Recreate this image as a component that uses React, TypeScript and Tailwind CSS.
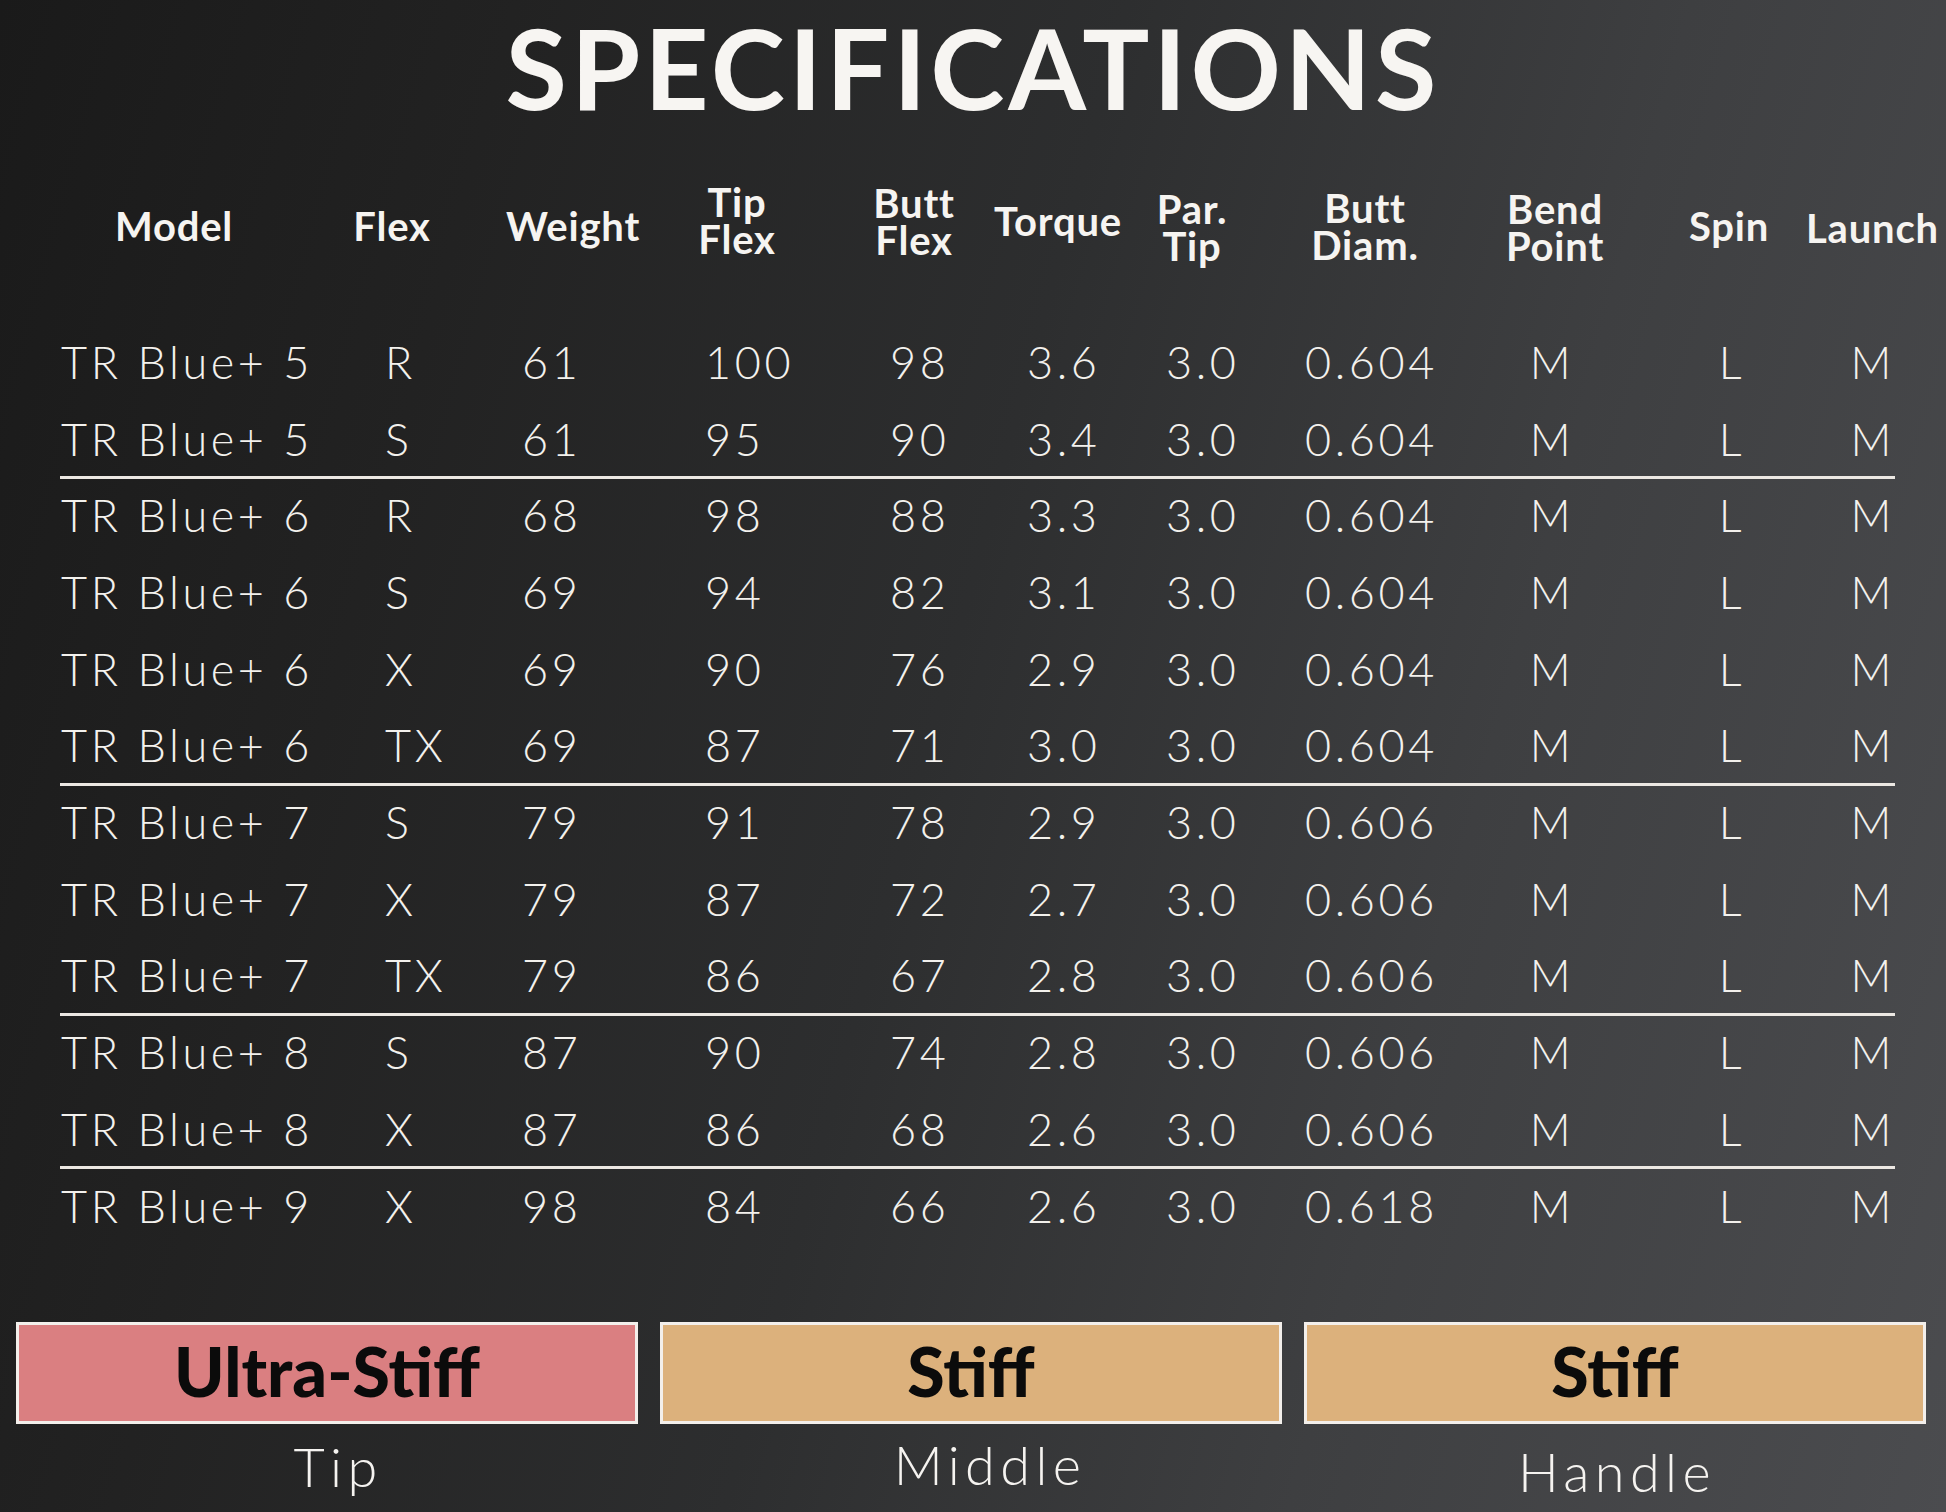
import React from "react";

type Spec = {
  model: string;
  flex: string;
  weight: string;
  tip: string;
  butt: string;
  torque: string;
  par: string;
  diam: string;
};

// rows grouped by model, a rule is drawn between groups
const groups: Spec[][] = [
  [
    { model: "TR Blue+ 5", flex: "R", weight: "61", tip: "100", butt: "98", torque: "3.6", par: "3.0", diam: "0.604" },
    { model: "TR Blue+ 5", flex: "S", weight: "61", tip: "95", butt: "90", torque: "3.4", par: "3.0", diam: "0.604" },
  ],
  [
    { model: "TR Blue+ 6", flex: "R", weight: "68", tip: "98", butt: "88", torque: "3.3", par: "3.0", diam: "0.604" },
    { model: "TR Blue+ 6", flex: "S", weight: "69", tip: "94", butt: "82", torque: "3.1", par: "3.0", diam: "0.604" },
    { model: "TR Blue+ 6", flex: "X", weight: "69", tip: "90", butt: "76", torque: "2.9", par: "3.0", diam: "0.604" },
    { model: "TR Blue+ 6", flex: "TX", weight: "69", tip: "87", butt: "71", torque: "3.0", par: "3.0", diam: "0.604" },
  ],
  [
    { model: "TR Blue+ 7", flex: "S", weight: "79", tip: "91", butt: "78", torque: "2.9", par: "3.0", diam: "0.606" },
    { model: "TR Blue+ 7", flex: "X", weight: "79", tip: "87", butt: "72", torque: "2.7", par: "3.0", diam: "0.606" },
    { model: "TR Blue+ 7", flex: "TX", weight: "79", tip: "86", butt: "67", torque: "2.8", par: "3.0", diam: "0.606" },
  ],
  [
    { model: "TR Blue+ 8", flex: "S", weight: "87", tip: "90", butt: "74", torque: "2.8", par: "3.0", diam: "0.606" },
    { model: "TR Blue+ 8", flex: "X", weight: "87", tip: "86", butt: "68", torque: "2.6", par: "3.0", diam: "0.606" },
  ],
  [
    { model: "TR Blue+ 9", flex: "X", weight: "98", tip: "84", butt: "66", torque: "2.6", par: "3.0", diam: "0.618" },
  ],
];

const HeaderRow = () => (
  <div className="flex items-center h-[80px] mt-[52px] text-[40px] leading-[37px] font-bold tracking-[0.02em] text-[#f6f4f1] whitespace-nowrap">
    <div className="shrink-0 w-[180px] ml-[84px] text-center">Model</div>
    <div className="shrink-0 w-[120px] ml-[68px] text-center">Flex</div>
    <div className="shrink-0 w-[160px] ml-[41px] text-center">Weight</div>
    <div className="shrink-0 w-[110px] ml-[29px] text-center -mt-[10px]">
      Tip
      <br />
      Flex
    </div>
    <div className="shrink-0 w-[110px] ml-[67px] text-center -mt-[8px]">
      Butt
      <br />
      Flex
    </div>
    <div className="shrink-0 w-[160px] ml-[9px] text-center -mt-[10px]">Torque</div>
    <div className="shrink-0 w-[100px] ml-[4px] text-center mt-[4px]">
      Par.
      <br />
      Tip
    </div>
    <div className="shrink-0 w-[140px] ml-[53px] text-center mt-[2px]">
      Butt
      <br />
      Diam.
    </div>
    <div className="shrink-0 w-[140px] ml-[50px] text-center mt-[4px]">
      Bend
      <br />
      Point
    </div>
    <div className="shrink-0 w-[100px] ml-[54px] text-center">Spin</div>
    <div className="shrink-0 w-[140px] ml-[27px] mt-[4px]">Launch</div>
  </div>
);

const DataRow = ({ s }: { s: Spec }) => (
  <div className="grid grid-cols-[325px_137px_183px_185px_137px_139px_139px_167px_160px_200px_1fr] h-[76.7px] items-center text-[45px] font-light tracking-[0.08em] text-[#f3f1ed]">
    <div className="pl-[1px] whitespace-nowrap">{s.model}</div>
    <div>{s.flex}</div>
    <div>{s.weight}</div>
    <div>{s.tip}</div>
    <div>{s.butt}</div>
    <div>{s.torque}</div>
    <div>{s.par}</div>
    <div>{s.diam}</div>
    <div className="text-center">M</div>
    <div className="text-center">L</div>
    <div className="text-right">M</div>
  </div>
);

const zones = [
  { label: "Ultra-Stiff", part: "Tip", color: "bg-[#da7f81]", pos: "mt-[16px] ml-[22px]" },
  { label: "Stiff", part: "Middle", color: "bg-[#dcb17c]", pos: "mt-[14px] ml-[38px]" },
  { label: "Stiff", part: "Handle", color: "bg-[#dcb17c]", pos: "mt-[21px] ml-[4px]" },
];

export default function App() {
  return (
    <div className="w-[1946px] h-[1512px] overflow-hidden bg-[linear-gradient(105deg,#1a1a1a_0%,#222222_22%,#2d2e2f_48%,#3e3f41_72%,#4b4c4f_100%)] font-['Lato',sans-serif]">
      <h1 className="text-center text-[112px] leading-[1.2] font-bold tracking-[0.035em] text-[#f7f5f2]">
        SPECIFICATIONS
      </h1>

      <HeaderRow />

      <div className="ml-[60px] w-[1835px] mt-[58px]">
        {groups.map((g, gi) => (
          <div key={gi}>
            {gi > 0 && <div className="h-[3px] -my-[1.5px] bg-[#ece8e3]" />}
            {g.map((s, i) => (
              <DataRow key={i} s={s} />
            ))}
          </div>
        ))}
      </div>

      <div className="flex gap-[22px] px-[16px] mt-[77px]">
        {zones.map((z) => (
          <div key={z.part} className="w-[622px] flex flex-col items-center">
            <div
              className={`w-full h-[102px] border-[3px] border-[#f3efeb] ${z.color} flex items-center justify-center pb-[4px]`}
            >
              <span className="text-[68px] leading-none font-black text-[#0b0b0b]">{z.label}</span>
            </div>
            <div className={`${z.pos} text-[54px] leading-none font-light tracking-[0.1em] text-[#f5f3f0]`}>
              {z.part}
            </div>
          </div>
        ))}
      </div>
    </div>
  );
}
